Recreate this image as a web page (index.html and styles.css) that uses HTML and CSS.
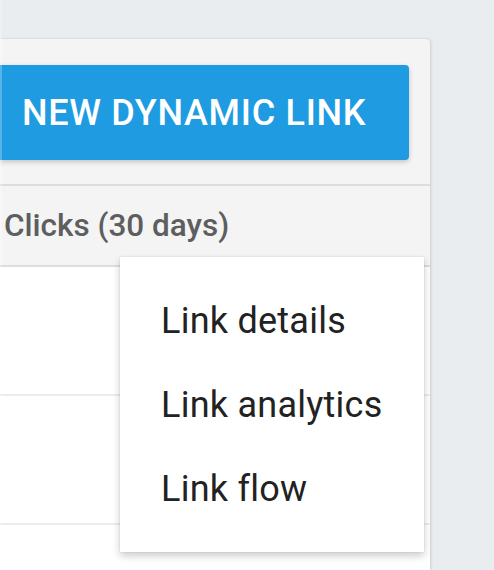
FILE: index.html
```html
<!DOCTYPE html>
<html>
<head>
<meta charset="utf-8">
<link rel="stylesheet" href="styles.css">
</head>
<body>
<div class="page">
  <div class="card">
    <div class="toolbar">
      <button class="primary">NEW DYNAMIC LINK</button>
    </div>
    <div class="table-head">
      <span class="col-title">Clicks (30 days)</span>
    </div>
    <div class="table-body">
      <div class="row"></div>
      <div class="row"></div>
      <div class="row"></div>
    </div>
    <div class="menu">
      <div class="menu-item">Link details</div>
      <div class="menu-item">Link analytics</div>
      <div class="menu-item">Link flow</div>
    </div>
  </div>
</div>
</body>
</html>
```

FILE: styles.css
```css
html, body {
  margin: 0;
  padding: 0;
  height: 100%;
  overflow: hidden;
}
body {
  background: #e9edf0;
  font-family: Roboto, "Liberation Sans", sans-serif;
}
body::before {
  content: "";
  position: fixed;
  left: 0;
  top: 0;
  bottom: 0;
  width: 2px;
  background: rgba(255, 255, 255, 0.25);
  z-index: 10;
}
.page {
  padding-top: 39px;
  height: 100%;
  box-sizing: border-box;
}
.card {
  position: relative;
  width: 430px;
  height: 100%;
  background: #f4f4f4;
  border-top-right-radius: 4px;
  box-shadow: 1px 0 3px rgba(0, 0, 0, 0.12), 0 0 1px rgba(0, 0, 0, 0.08);
  display: flex;
  flex-direction: column;
}
.toolbar {
  flex-shrink: 0;
  padding: 26px 21px 24px 0;
  display: flex;
}
.primary {
  flex: 1;
  height: 95px;
  border: none;
  border-radius: 0 4px 4px 0;
  background: #1e9be1;
  color: #fff;
  font-family: Roboto, "Liberation Sans", sans-serif;
  font-weight: 500;
  font-size: 36px;
  letter-spacing: 0.7px;
  text-align: left;
  padding: 0 0 0 22px;
  box-shadow: 0 2px 5px rgba(0, 0, 0, 0.2);
}
.table-head {
  flex-shrink: 0;
  border-top: 2px solid #dddddd;
  border-bottom: 2px solid #dddddd;
  height: 79px;
  display: flex;
  align-items: center;
  padding-left: 4px;
}
.col-title {
  font-size: 31.5px;
  color: #5e5e5e;
  font-weight: 500;
}
.table-body {
  flex: 1;
  min-height: 0;
  overflow: hidden;
  background: #fff;
}
.row {
  height: 127px;
  border-bottom: 2px solid #ececec;
}
.menu {
  position: absolute;
  left: 120px;
  top: 218px;
  width: 304px;
  box-sizing: border-box;
  padding: 22px 0 21px 0;
  background: #fff;
  box-shadow: 0 4px 8px rgba(0, 0, 0, 0.2), 0 0 2px rgba(0, 0, 0, 0.1);
}
.menu-item {
  height: 84px;
  line-height: 84px;
  padding-left: 41px;
  font-size: 36px;
  letter-spacing: 0.25px;
  color: #222;
}
```
